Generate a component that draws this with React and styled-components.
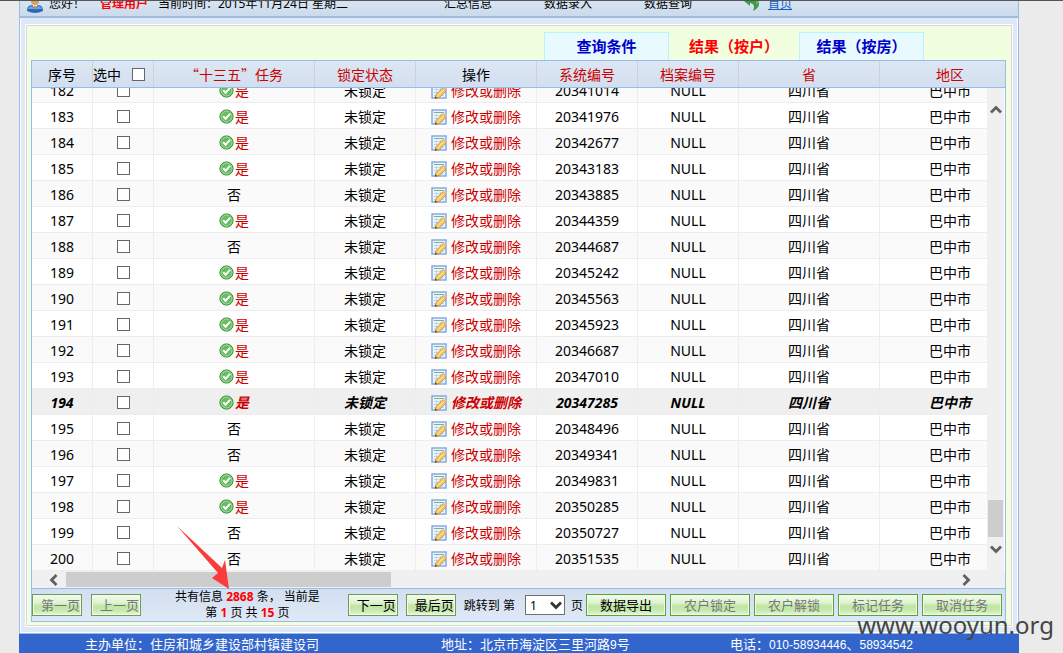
import React from "react";
import styled, { createGlobalStyle, css } from "styled-components";

const GlobalStyle = createGlobalStyle`
  * { box-sizing: border-box; }
  body {
    margin: 0;
    background: #ebebeb;
    color: #000;
    font-family: "Noto Sans", "Noto Sans CJK SC", sans-serif;
    font-size: 14px;
  }
  button, select, input { font-family: inherit; }
`;

const Screen = styled.div`
  position: relative;
  overflow: hidden;
  border-top: 1px solid #555;
`;

const Page = styled.div`
  margin: 0 44px 0 19px;
`;

const TopBar = styled.header`
  display: flex;
  align-items: flex-end;
  height: 17px;
  overflow: hidden;
  padding: 0 7px 3px;
  border: 1px solid #99bbe8;
  border-top: 0;
  border-bottom: 2px solid #a0bcda;
  background: linear-gradient(#d6e3f2, #cbdbec);
  font-size: 12px;
  line-height: 18px;
  white-space: nowrap;
`;

const UserName = styled.strong`
  width: 58px;
  color: #f00;
`;

const Greeting = styled.span`
  width: 51px;
  margin-left: 6px;
`;

const Clock = styled.span`
  width: 286px;
`;

const MenuItem = styled.span`
  width: 100px;
`;

const HomeLink = styled.a`
  margin-left: 8px;
  color: #1160c4;
`;

const TopIcon = styled.svg`
  flex: none;
  width: 16px;
  height: 16px;
`;

const Frame = styled.div`
  padding: 6px 5px;
  border: 1px solid #99bbe8;
  border-top: 0;
  background: #dfe8f6;
  box-shadow: inset 1px 0 #fff, inset -1px 0 #fff, inset 0 -1px #fff;
`;

const Panel = styled.main`
  padding: 6px 5px 3px 4px;
  border: 1px solid #d8d8d8;
  background: #f1ffe0;
  box-shadow: 0 0 0 1px #fff;
  margin: 1px;
`;

const Tabs = styled.nav`
  display: flex;
  justify-content: flex-end;
  padding-right: 82px;
`;

const Tab = styled.button`
  width: ${(p) => (p.$active ? 130 : 125)}px;
  height: 28px;
  padding: 0 0 2px;
  border: 1px solid ${(p) => (p.$active ? "transparent" : "#b8f4fd")};
  border-bottom: 0;
  background: ${(p) => (p.$active ? "transparent" : "#e9faff")};
  color: ${(p) => (p.$active ? "#f00" : "#00c")};
  font-size: 15px;
  font-weight: bold;
  line-height: 24px;
`;

const Grid = styled.section`
  border: 1px solid #99bbe8;
  background: #fff;
`;

const HeaderClip = styled.div`
  overflow: hidden;
  border-bottom: 1px solid #99bbe8;
  background: linear-gradient(#dde7f3, #d2dff0);
`;

const Table = styled.table`
  flex: none;
  width: 989px;
  table-layout: fixed;
  border-collapse: separate;
  border-spacing: 0;
  text-align: center;
  white-space: nowrap;
`;

const HeadCell = styled.th`
  height: 26px;
  padding: 0;
  border-right: 1px solid #d0d0d0;
  color: ${(p) => (p.$sortable ? "#c00" : "#000")};
  font-family: "Noto Sans CJK SC", sans-serif;
  font-weight: normal;
  line-height: 26px;
`;

const SelectAll = styled.label`
  display: flex;
  align-items: center;
  gap: 11px;
`;

const Tick = styled.input`
  appearance: none;
  display: block;
  width: 13px;
  height: 13px;
  margin: ${(p) => (p.$inRow ? "0 auto" : "0")};
  border: 1px solid #666;
  background: #fff;
`;

const BodyArea = styled.div`
  display: flex;
  height: 483px;
`;

const Viewport = styled.div`
  display: flex;
  flex: 1;
  flex-direction: column;
  justify-content: flex-end;
  min-width: 0;
  overflow: hidden;
`;

const Row = styled.tr`
  background: ${(p) => (p.$even ? "#fafafa" : "#fff")};
  ${(p) =>
    p.$hover &&
    css`
      background: #efefef;
      font-style: italic;
      font-weight: bold;
    `}
`;

const Cell = styled.td`
  height: 26px;
  padding: 2px 0 0;
  border-right: 1px solid #ededed;
  border-bottom: 1px solid #ededed;
  line-height: 23px;
`;

const Inline = styled.span`
  display: flex;
  align-items: center;
  justify-content: center;
  gap: ${(p) => p.$gap || 0}px;
  color: #c00;
`;

const EditLink = styled.a`
  color: #c00;
  text-decoration: none;
`;

const RowIcon = styled.svg`
  flex: none;
  display: block;
`;

const VScroll = styled.div`
  display: flex;
  flex-direction: column;
  align-items: center;
  width: 17px;
  margin-right: 1px;
  padding: 16px 0;
  background: #f0f0f0;
`;

const VThumb = styled.div`
  width: 15px;
  height: 37px;
  margin: auto 0 6px;
  background: #cdcdcd;
`;

const HScroll = styled.div`
  display: flex;
  align-items: center;
  height: 17px;
  padding: 0 33px 0 16px;
  background: #f0f0f0;
`;

const HThumb = styled.div`
  width: 325px;
  height: 15px;
  margin: 0 auto 0 6px;
  background: #cdcdcd;
`;

const Pager = styled.div`
  display: flex;
  align-items: center;
  height: 33px;
  padding-right: 3px;
  border-top: 1px solid #99bbe8;
  background: linear-gradient(#d2dff0, #dfe8f6);
  font-size: 12px;
  white-space: nowrap;
`;

const Group = styled.div`
  display: flex;
  align-items: center;
  gap: ${(p) => p.$gap}px;
`;

const Button = styled.button`
  width: ${(p) => (p.$wide ? 80 : 50)}px;
  height: 22px;
  padding: ${(p) => (p.$wide ? "0" : "0 0 0 8px")};
  border: 1px solid ${(p) => (p.$wide ? "#5aa53a" : "#6f9c58")};
  background: linear-gradient(#f4fbef, #dcf2cd 40%, #bfe5a4 55%, #c9eab2 80%, #e6f7da);
  box-shadow: inset 0 0 0 1px #f2fbea;
  color: #000;
  font-size: 13px;
  line-height: 20px;
  text-align: ${(p) => (p.$wide ? "center" : "left")};
  white-space: nowrap;
  &:disabled { color: #777; }
`;

const Summary = styled.p`
  flex: 1;
  margin: 0;
  padding-left: 6px;
  line-height: 16px;
  text-align: center;
`;

const Count = styled.strong`
  color: #f00;
`;

const Jump = styled.label`
  display: flex;
  align-items: center;
  padding: 0 3px 0 8px;
`;

const SelectBox = styled.span`
  display: grid;
  align-items: center;
  margin: 0 6px 0 10px;
  > * { grid-area: 1 / 1; }
  > svg { justify-self: end; margin-right: 3px; pointer-events: none; }
`;

const PageSelect = styled.select`
  appearance: none;
  width: 40px;
  height: 20px;
  padding: 0 4px;
  border: 1px solid #707070;
  border-radius: 0;
  background: #fff;
  color: #000;
  font-size: 12px;
`;

const Footer = styled.footer`
  display: flex;
  height: 19px;
  padding-left: 66px;
  background: #36c;
  color: #fff;
  font-family: "Noto Sans CJK SC", sans-serif;
  font-size: 13px;
  line-height: 20px;
  white-space: nowrap;
`;

const FooterItem = styled.span`
  width: ${(p) => p.$width}px;
`;

const Digits = styled.span`
  font-family: "Liberation Sans", sans-serif;
  font-size: 12px;
`;

const Arrow = styled.svg`
  position: absolute;
  left: 176px;
  top: 523px;
  width: 56px;
  height: 68px;
  pointer-events: none;
`;

const Watermark = styled.div`
  position: absolute;
  right: 9px;
  bottom: 10px;
  color: #444;
  font-size: 24px;
  line-height: 36px;
`;

const widths = [61, 61, 161, 101, 121, 101, 101, 141, 141];

const records = [
  [182, 1, "20341014"],
  [183, 1, "20341976"],
  [184, 1, "20342677"],
  [185, 1, "20343183"],
  [186, 0, "20343885"],
  [187, 1, "20344359"],
  [188, 0, "20344687"],
  [189, 1, "20345242"],
  [190, 1, "20345563"],
  [191, 1, "20345923"],
  [192, 1, "20346687"],
  [193, 1, "20347010"],
  [194, 1, "20347285"],
  [195, 0, "20348496"],
  [196, 0, "20349341"],
  [197, 1, "20349831"],
  [198, 1, "20350285"],
  [199, 0, "20350727"],
  [200, 0, "20351535"],
];

const Columns = () => (
  <colgroup>
    {widths.map((w, i) => (
      <col key={i} width={w} />
    ))}
  </colgroup>
);

const CheckIcon = () => (
  <RowIcon width="15" height="15" viewBox="0 0 15 15">
    <circle cx="7.5" cy="7.5" r="6.6" fill="#66bd62" stroke="#2f8a2c" />
    <circle cx="7.5" cy="7.5" r="5.5" fill="none" stroke="#a9dba3" />
    <path d="M4.2 7.3 6.6 9.700 11 4.900" fill="none" stroke="#fff" strokeWidth="2" />
  </RowIcon>
);

const EditIcon = () => (
  <RowIcon width="16" height="16" viewBox="0 0 16 16">
    <rect x="1" y="1" width="14" height="14" fill="#eef5fd" stroke="#7ba5e0" strokeWidth="1.4" />
    <path d="M3 3.500h10" stroke="#7db56c" />
    <path d="M3 6.500h10M3 9.500h10M3 12.500h10M5.500 5v9M9.500 5v9" stroke="#bdd4f0" />
    <path d="M4 15.500 5 11.600 11.600 5 15 8.300 8.300 14.600Z" fill="#f5c95c" stroke="#c08a3c" strokeWidth="0.8" />
    <path d="M6.700 12.600 13 6.600" stroke="#fff0b0" />
    <path d="M11.600 5 13 3.800 15.800 6.800 15 8.300Z" fill="#f3b592" />
    <path d="M4 15.500 4.400 13.600 6.200 15Z" fill="#333" />
  </RowIcon>
);

const chevrons = {
  up: "M1 8.500 6 3.500 11 8.500",
  down: "M1 3.500 6 8.500 11 3.500",
  left: "M8.500 1 3.500 6 8.500 11",
  right: "M3.500 1 8.500 6 3.500 11",
};

const Chevron = ({ dir, color = "#606060" }) => (
  <RowIcon width="12" height="12" viewBox="0 0 12 12">
    <path d={chevrons[dir]} fill="none" stroke={color} strokeWidth="2.8" />
  </RowIcon>
);

export default function App() {
  return (
    <Screen>
      <GlobalStyle />
      <Page>
        <TopBar>
          <TopIcon viewBox="0 0 16 16">
            <circle cx="8" cy="4" r="4" fill="#d9a05b" />
            <path d="M0 14Q0 8 5 8H11Q16 8 16 14Q8 18 0 14Z" fill="#2c68b8" />
            <path d="M1 12Q2 9 5 9L8 12 11 9Q14 9 15 12" fill="#6aa5e4" />
            <path d="M5.500 8H10.500L8 12Z" fill="#fff" />
            <path d="M7.300 8.500H8.700L9 11 8 13 7 11Z" fill="#d78522" />
          </TopIcon>
          <Greeting>您好！</Greeting>
          <UserName>管理用户</UserName>
          <Clock>当前时间：2015年11月24日 星期二</Clock>
          <MenuItem>汇总信息</MenuItem>
          <MenuItem>数据录入</MenuItem>
          <MenuItem>数据查询</MenuItem>
          <TopIcon viewBox="0 0 16 16">
            <path d="M0 4 6 0V2Q15 1 15 7Q15 11 9 14Q12 7 6 6V9Z" fill="#3f9b45" />
            <path d="M7 3Q13 2 13.500 7" fill="none" stroke="#8bd08a" />
          </TopIcon>
          <HomeLink href="#home">首页</HomeLink>
        </TopBar>

        <Frame>
          <Panel>
            <Tabs>
              <Tab type="button">查询条件</Tab>
              <Tab type="button" $active>结果（按户）</Tab>
              <Tab type="button">结果（按房）</Tab>
            </Tabs>

            <Grid>
              <HeaderClip>
                <Table>
                  <Columns />
                  <thead>
                    <tr>
                      <HeadCell>序号</HeadCell>
                      <HeadCell>
                        <SelectAll>
                          选中
                          <Tick type="checkbox" />
                        </SelectAll>
                      </HeadCell>
                      <HeadCell $sortable>“十三五”任务</HeadCell>
                      <HeadCell $sortable>锁定状态</HeadCell>
                      <HeadCell>操作</HeadCell>
                      <HeadCell $sortable>系统编号</HeadCell>
                      <HeadCell $sortable>档案编号</HeadCell>
                      <HeadCell $sortable>省</HeadCell>
                      <HeadCell $sortable>地区</HeadCell>
                    </tr>
                  </thead>
                </Table>
              </HeaderClip>

              <BodyArea>
                <Viewport>
                  <Table>
                    <Columns />
                    <tbody>
                      {records.map(([no, task, code]) => (
                        <Row key={no} $even={no % 2 === 0} $hover={no === 194}>
                          <Cell>{no}</Cell>
                          <Cell>
                            <Tick type="checkbox" $inRow aria-label={`选中 ${no}`} />
                          </Cell>
                          <Cell>
                            {task ? (
                              <Inline $gap={1}>
                                <CheckIcon />是
                              </Inline>
                            ) : (
                              "否"
                            )}
                          </Cell>
                          <Cell>未锁定</Cell>
                          <Cell>
                            <Inline $gap={4}>
                              <EditIcon />
                              <EditLink href="#edit">修改或删除</EditLink>
                            </Inline>
                          </Cell>
                          <Cell>{code}</Cell>
                          <Cell>NULL</Cell>
                          <Cell>四川省</Cell>
                          <Cell>巴中市</Cell>
                        </Row>
                      ))}
                    </tbody>
                  </Table>
                </Viewport>
                <VScroll>
                  <Chevron dir="up" />
                  <VThumb />
                  <Chevron dir="down" />
                </VScroll>
              </BodyArea>
              <HScroll>
                <Chevron dir="left" />
                <HThumb />
                <Chevron dir="right" />
              </HScroll>

              <Pager>
                <Group $gap={9}>
                  <Button type="button" disabled>第一页</Button>
                  <Button type="button" disabled>上一页</Button>
                </Group>
                <Summary>
                  共有信息 <Count>2868</Count> 条， 当前是
                  <br />第 <Count>1</Count> 页 共 <Count>15</Count> 页
                </Summary>
                <Group $gap={8}>
                  <Button type="button">下一页</Button>
                  <Button type="button">最后页</Button>
                </Group>
                <Jump>
                  跳转到 第
                  <SelectBox>
                    <PageSelect defaultValue="1">
                      <option>1</option>
                    </PageSelect>
                    <Chevron dir="down" color="#333" />
                  </SelectBox>
                  页
                </Jump>
                <Group $gap={4}>
                  <Button type="button" $wide>数据导出</Button>
                  <Button type="button" $wide disabled>农户锁定</Button>
                  <Button type="button" $wide disabled>农户解锁</Button>
                  <Button type="button" $wide disabled>标记任务</Button>
                  <Button type="button" $wide disabled>取消任务</Button>
                </Group>
              </Pager>
            </Grid>
          </Panel>
        </Frame>

        <Footer>
          <FooterItem $width={356}>主办单位：住房和城乡建设部村镇建设司</FooterItem>
          <FooterItem $width={289}>
            地址：北京市海淀区三里河路<Digits>9</Digits>号
          </FooterItem>
          <FooterItem $width={200}>
            电话：<Digits>010-58934446</Digits>、<Digits>58934542</Digits>
          </FooterItem>
        </Footer>
      </Page>

      <Arrow viewBox="0 0 56 68">
        <path d="M1 2 46 44 49 36 53 65 36 54 42 49Z" fill="#fb3b3b" />
      </Arrow>
      <Watermark>www.wooyun.org</Watermark>
    </Screen>
  );
}
